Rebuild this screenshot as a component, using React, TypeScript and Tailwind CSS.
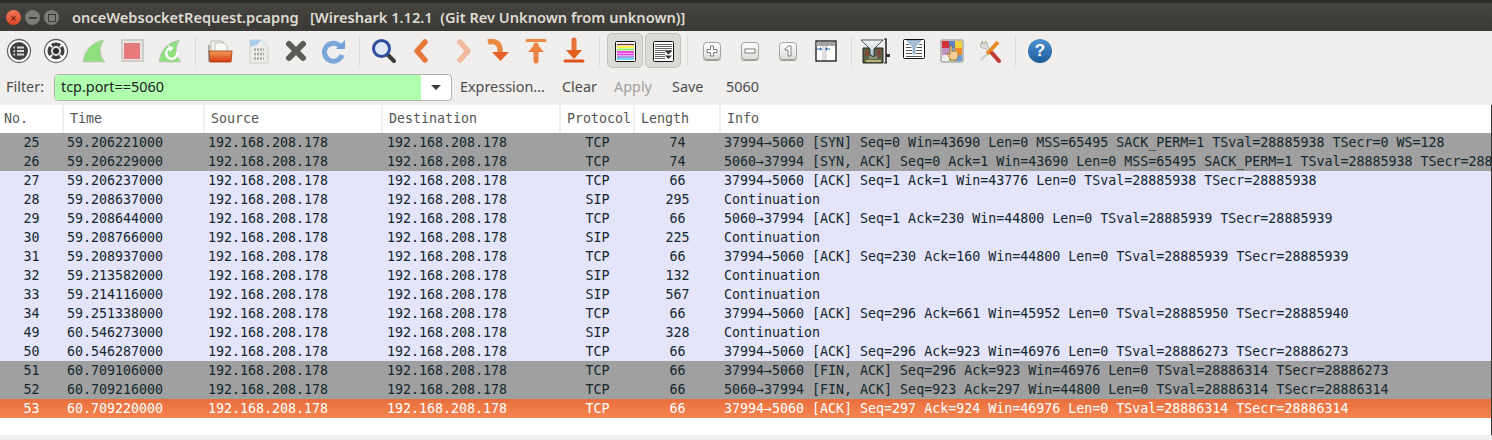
import type { ReactNode } from 'react';

type Packet = [number, string, string, number, string, ('gray' | 'sel')?];

const SRC = '192.168.208.178';

const PACKETS: Packet[] = [
  [25, '59.206221000', 'TCP', 74, '37994→5060 [SYN] Seq=0 Win=43690 Len=0 MSS=65495 SACK_PERM=1 TSval=28885938 TSecr=0 WS=128', 'gray'],
  [26, '59.206229000', 'TCP', 74, '5060→37994 [SYN, ACK] Seq=0 Ack=1 Win=43690 Len=0 MSS=65495 SACK_PERM=1 TSval=28885938 TSecr=288', 'gray'],
  [27, '59.206237000', 'TCP', 66, '37994→5060 [ACK] Seq=1 Ack=1 Win=43776 Len=0 TSval=28885938 TSecr=28885938'],
  [28, '59.208637000', 'SIP', 295, 'Continuation'],
  [29, '59.208644000', 'TCP', 66, '5060→37994 [ACK] Seq=1 Ack=230 Win=44800 Len=0 TSval=28885939 TSecr=28885939'],
  [30, '59.208766000', 'SIP', 225, 'Continuation'],
  [31, '59.208937000', 'TCP', 66, '37994→5060 [ACK] Seq=230 Ack=160 Win=44800 Len=0 TSval=28885939 TSecr=28885939'],
  [32, '59.213582000', 'SIP', 132, 'Continuation'],
  [33, '59.214116000', 'SIP', 567, 'Continuation'],
  [34, '59.251338000', 'TCP', 66, '37994→5060 [ACK] Seq=296 Ack=661 Win=45952 Len=0 TSval=28885950 TSecr=28885940'],
  [49, '60.546273000', 'SIP', 328, 'Continuation'],
  [50, '60.546287000', 'TCP', 66, '37994→5060 [ACK] Seq=296 Ack=923 Win=46976 Len=0 TSval=28886273 TSecr=28886273'],
  [51, '60.709106000', 'TCP', 66, '37994→5060 [FIN, ACK] Seq=296 Ack=923 Win=46976 Len=0 TSval=28886314 TSecr=28886273', 'gray'],
  [52, '60.709216000', 'TCP', 66, '5060→37994 [FIN, ACK] Seq=923 Ack=297 Win=44800 Len=0 TSval=28886314 TSecr=28886314', 'gray'],
  [53, '60.709220000', 'TCP', 66, '37994→5060 [ACK] Seq=297 Ack=924 Win=46976 Len=0 TSval=28886314 TSecr=28886314', 'sel'],
];

function Tool({ children, first }: { children: ReactNode; first?: boolean }) {
  return (
    <div className={`flex h-full shrink-0 items-center justify-center ${first ? 'w-[37px]' : 'w-[38px]'}`}>
      {children}
    </div>
  );
}

function Sep() {
  return (
    <div className="flex h-full w-[12px] shrink-0 items-center justify-center">
      <div className="h-[30px] w-px bg-[#dedbd8]" />
    </div>
  );
}

function Icon({ children }: { children: ReactNode }) {
  return (
    <svg width="28" height="28" viewBox="0 0 28 28" className="shrink-0">
      {children}
    </svg>
  );
}

function Fin({ reload }: { reload?: boolean }) {
  return (
    <Icon>
      <path d="M3 25C4 14 11 5 24 3C19 10 19 18 25 25Z" fill="#8ee07e" stroke="#c9c9c5" strokeWidth="1" />
      {reload && (
        <>
          <path d="M17 11a5.500 5.500 0 1 0 4 4" fill="none" stroke="#fff" strokeWidth="2.400" />
          <path d="M12 8l5 3-3 4Z" fill="#fff" />
        </>
      )}
    </Icon>
  );
}

function ZoomBtn({ children }: { children: ReactNode }) {
  return (
    <div className="flex h-[18px] w-[18px] items-center justify-center rounded-[4px] border border-[#a5a3a0] bg-gradient-to-b from-white to-[#dfddda] shadow-[0_1px_0_#9a9894]">
      {children}
    </div>
  );
}

function ListIcon({ autoscroll }: { autoscroll?: boolean }) {
  return (
    <svg width="24" height="24" viewBox="0 0 24 24">
      <rect x="2.500" y="2.500" width="20" height="20" rx="1" fill="#fff" stroke="#111" />
      {autoscroll ? (
        <>
          {[5, 7, 9, 11, 13, 15, 17, 19].map((y) => (
            <path key={y} d={`M4 ${y + 0.5}H${y > 11 ? 14 : 21}`} stroke="#666" />
          ))}
          <path d="M14 12h7l-3.500 3.500ZM14 16.500h7l-3.500 3.500Z" fill="#333" />
        </>
      ) : (
        <>
          <path d="M4 5.500H21" stroke="#7a2b2b" strokeWidth="1.300" />
          <path d="M4 8H21" stroke="#fff04a" strokeWidth="2" />
          <path d="M4 10.500H21" stroke="#8ee86a" strokeWidth="2" />
          <path d="M4 13H21" stroke="#ec4fe0" strokeWidth="2" />
          <path d="M4 15.500H21" stroke="#d845ea" strokeWidth="2" />
          <path d="M4 18H21" stroke="#8f82e0" strokeWidth="1.600" />
          <path d="M4 20H21" stroke="#45d2ec" strokeWidth="1.600" />
        </>
      )}
    </svg>
  );
}

function Toolbar() {
  return (
    <div className="flex h-[39px] items-center">
      <Tool first>
        <svg width="26" height="26" viewBox="0 0 26 26">
          <circle cx="13" cy="13" r="11.500" fill="#fff" stroke="#666" strokeWidth="1.300" />
          <circle cx="13" cy="13" r="9" fill="#3f3f3f" />
          <path d="M11 9.500h7M11 13h7M11 16.500h7" stroke="#d8d8d8" strokeWidth="2" />
          <path d="M7.500 9.500h1.600M7.500 13h1.600M7.500 16.500h1.600" stroke="#d8d8d8" strokeWidth="2" />
        </svg>
      </Tool>
      <Tool>
        <svg width="26" height="26" viewBox="0 0 26 26">
          <circle cx="13" cy="13" r="11.500" fill="#fff" stroke="#666" strokeWidth="1.300" />
          <circle cx="13" cy="13" r="8.500" fill="#3f3f3f" />
          <path d="M6.500 6.500l2.500 2.500M19.500 6.500L17 9M6.500 19.500L9 17M19.500 19.500L17 17" stroke="#fff" strokeWidth="2" />
          <circle cx="13" cy="13" r="5" fill="#e4e3e0" />
          <circle cx="13" cy="13" r="3" fill="#2e2e2e" />
        </svg>
      </Tool>
      <Tool>
        <Fin />
      </Tool>
      <Tool>
        <div className="flex h-[23px] w-[23px] items-center justify-center border-2 border-[#cfcdca] bg-[#e8e6e4]">
          <div className="h-[16px] w-[16px] bg-[#e77b7b]" />
        </div>
      </Tool>
      <Tool>
        <Fin reload />
      </Tool>
      <Sep />
      <Tool>
        <Icon>
          <path d="M5 4h11l4 4v8H5Z" fill="#f6f5f1" stroke="#b8b6ae" />
          <path d="M9 6h9l3 3v8H9Z" fill="#fbfaf7" stroke="#c2c0b9" />
          <path d="M3 14h23l-1 11H4Z" fill="url(#folder)" stroke="#a8300c" strokeWidth="0.800" />
          <path d="M3 8v17" stroke="#6e6a5f" />
          <defs>
            <linearGradient id="folder" x1="0" y1="0" x2="0" y2="1">
              <stop offset="0" stopColor="#f4a05a" />
              <stop offset="1" stopColor="#d6370f" />
            </linearGradient>
          </defs>
        </Icon>
      </Tool>
      <Tool>
        <Icon>
          <path d="M6 3h12l6 6v17H6Z" fill="#eeeee8" stroke="#cbcbc5" />
          <path d="M6 3h11l-4 5-7 2Z" fill="#a9cdea" />
          <path d="M18 3l6 6h-6Z" fill="#dfe9ef" />
          <path d="M10 12.500h10M10 17h10M10 21.500h10" stroke="#a8a8a2" strokeWidth="2.400" strokeDasharray="2 1" />
        </Icon>
      </Tool>
      <Tool>
        <Icon>
          <path d="M7 7L21 21M21 7L7 21" stroke="#5b5b58" strokeWidth="6" strokeLinecap="round" />
        </Icon>
      </Tool>
      <Tool>
        <Icon>
          <path d="M20 9A9 9 0 1 0 22 18" fill="none" stroke="#7ba8da" strokeWidth="5" />
          <path d="M16 12h9V3Z" fill="#6f9fd6" />
        </Icon>
      </Tool>
      <Sep />
      <Tool>
        <Icon>
          <path d="M17 17l7 7" stroke="#3a3a3a" strokeWidth="4" strokeLinecap="round" />
          <circle cx="11.500" cy="11.500" r="8" fill="#dfe8f5" stroke="#2d4f9e" strokeWidth="3" />
        </Icon>
      </Tool>
      <Tool>
        <Icon>
          <path d="M17 5L9 14l8 9" fill="none" stroke="#e9773a" strokeWidth="5.500" strokeLinecap="round" strokeLinejoin="round" />
        </Icon>
      </Tool>
      <Tool>
        <div className="ml-[3px] flex">
          <Icon>
            <path d="M12 5l8 9-8 9" fill="none" stroke="#f3b99d" strokeWidth="5.500" strokeLinecap="round" strokeLinejoin="round" />
          </Icon>
        </div>
      </Tool>
      <Tool>
        <Icon>
          <path d="M4 5c8-2 13 2 12 11" fill="none" stroke="#ec8a44" strokeWidth="5.500" />
          <path d="M8 15h17l-8.500 9Z" fill="#e4642a" />
        </Icon>
      </Tool>
      <Tool>
        <Icon>
          <path d="M5 3.500h18" stroke="#ec8a44" strokeWidth="3" strokeLinecap="round" />
          <path d="M14 8v16" stroke="#ec8040" strokeWidth="5" strokeLinecap="round" />
          <path d="M6 15l8-9 8 9Z" fill="#ec8040" />
        </Icon>
      </Tool>
      <Tool>
        <Icon>
          <path d="M5 24h18" stroke="#e4521c" strokeWidth="3" strokeLinecap="round" />
          <path d="M14 3v15" stroke="#e9723a" strokeWidth="5" strokeLinecap="round" />
          <path d="M6 13l8 9 8-9Z" fill="#e4601f" />
        </Icon>
      </Tool>
      <Sep />
      <div className="ml-[2px] flex h-[35px] w-[36px] shrink-0 items-center justify-center rounded-[5px] border border-[#c4c2bf] bg-[#dcdad7]">
        <ListIcon />
      </div>
      <div className="ml-[2px] flex h-[35px] w-[36px] shrink-0 items-center justify-center rounded-[5px] border border-[#c4c2bf] bg-[#dcdad7]">
        <ListIcon autoscroll />
      </div>
      <Sep />
      <Tool>
        <ZoomBtn>
          <svg width="12" height="12" viewBox="0 0 12 12">
            <path d="M4.500 1h3v3.500H11v3H7.500V11h-3V7.500H1v-3h3.500Z" fill="#fff" stroke="#7d7c78" />
          </svg>
        </ZoomBtn>
      </Tool>
      <Tool>
        <ZoomBtn>
          <svg width="12" height="12" viewBox="0 0 12 12">
            <rect x="1" y="4" width="10" height="4" fill="#fff" stroke="#7d7c78" />
          </svg>
        </ZoomBtn>
      </Tool>
      <Tool>
        <ZoomBtn>
          <svg width="12" height="12" viewBox="0 0 12 12">
            <path d="M3 4l3-3h3v10H6V5H3Z" fill="#fff" stroke="#7d7c78" />
          </svg>
        </ZoomBtn>
      </Tool>
      <Tool>
        <svg width="22" height="22" viewBox="0 0 22 22">
          <rect x="1" y="1" width="20" height="20" fill="#fff" stroke="#111" strokeWidth="1.300" />
          <rect x="2" y="2" width="18" height="4" fill="#a9a9a9" />
          <rect x="7" y="6" width="5" height="14" fill="#dedede" />
          <path d="M1.500 2v4M7 2v4M12 2v4M17 2v4" stroke="#888" />
          <path d="M2 9h3M12 9h3" stroke="#2c5fa8" />
          <path d="M5 7l2 2-2 2ZM12 7l-2 2 2 2Z" fill="#2c5fa8" />
        </svg>
      </Tool>
      <Sep />
      <Tool>
        <svg width="32" height="30" viewBox="0 0 32 30">
          <path d="M3 12h20v15H3Z" fill="#5a6647" stroke="#222" />
          <path d="M5 14h4v6H5ZM17 13h4v8h-4Z" fill="#7f4a3a" />
          <path d="M9 20h8v3H9Z" fill="#8a9478" />
          <path d="M6 24h15v2H6Z" fill="#c3b27c" />
          <path d="M26 3v24" stroke="#222" strokeWidth="1.500" />
          <path d="M24 3h3M24 27h3" stroke="#222" />
          <path d="M26 18h4v3h-4Z" fill="#333" />
          <path d="M1 4h22l-9 9v8l-4-2v-6Z" fill="url(#funnel)" stroke="#222" strokeWidth="0.800" />
          <defs>
            <linearGradient id="funnel" x1="0" y1="0" x2="0" y2="1">
              <stop offset="0" stopColor="#fff" />
              <stop offset="1" stopColor="#9fb7c9" />
            </linearGradient>
          </defs>
        </svg>
      </Tool>
      <Tool>
        <svg width="24" height="24" viewBox="0 0 24 24" className="-mt-[4px]">
          <rect x="1.500" y="2.500" width="21" height="19" rx="1" fill="#fff" stroke="#111" />
          <path d="M4 7.500H20M4 10.500H20M4 13.500H20M4 16.500H20M4 19.500H20" stroke="#555" />
          <path d="M3 3h18l-7 8v8h-4v-8Z" fill="#fff" />
          <path d="M5 3.500h14l-6 6.500v7h-2v-7Z" fill="#a6c0d6" stroke="#6c8aa3" strokeWidth="0.600" />
        </svg>
      </Tool>
      <Tool>
        <svg width="24" height="24" viewBox="0 0 24 24">
          <rect x="1" y="1" width="22" height="22" rx="1" fill="#eee" stroke="#888" />
          <rect x="2" y="2" width="7" height="7" fill="#d4333a" />
          <rect x="9" y="2" width="6" height="7" fill="#5c7fc0" />
          <rect x="15" y="2" width="7" height="7" fill="#f2d23c" />
          <rect x="2" y="9" width="7" height="7" fill="#c094c0" />
          <rect x="9" y="9" width="6" height="7" fill="#7fa7d8" />
          <rect x="15" y="9" width="7" height="7" fill="#f08c2c" />
          <rect x="9" y="16" width="6" height="6" fill="#8ccb50" />
          <rect x="15" y="16" width="7" height="6" fill="#6aa0d8" />
          <path d="M10 7h2v6l1-1h3c1 0 2 1 2 2v4l-2 3h-5l-4-6 1-1 2 2Z" fill="#f6cf98" stroke="#a86a20" strokeWidth="0.800" />
        </svg>
      </Tool>
      <Tool>
        <svg width="24" height="24" viewBox="0 0 24 24">
          <path d="M5 2a4.500 4.500 0 0 0-2 6c1 1 2 1.500 4 1L19 22l2-1L9 7c.5-2 0-4-1.500-5l-1 3-2.500-.5Z" fill="#e2e2e0" stroke="#9a9a96" strokeWidth="0.800" />
          <path d="M20 3L9 15" stroke="#ee8a22" strokeWidth="4" />
          <path d="M9 15L3 21" stroke="#c9c9c6" strokeWidth="2" />
          <path d="M14 14l7 8" stroke="#c43a34" strokeWidth="4" strokeLinecap="round" />
        </svg>
      </Tool>
      <Sep />
      <Tool>
        <div className="flex h-[24px] w-[24px] items-center justify-center rounded-full bg-gradient-to-b from-[#4c93cf] to-[#1f5d9c] font-['Liberation_Sans',sans-serif] text-[17px] font-bold text-white">
          ?
        </div>
      </Tool>
    </div>
  );
}

function FilterRow() {
  return (
    <div className="flex h-[35px] items-center pb-[1px] font-['Noto_Sans',sans-serif] text-[14.4px] text-[#4c4c4c]">
      <span className="ml-[6px] w-[48px]">Filter:</span>
      <div className="flex h-[27px] w-[398px] overflow-hidden rounded-[4px] border border-[#b5b3af] bg-white">
        <div className="flex flex-1 items-center bg-[#afffaf] pl-[6px] text-[#222]">tcp.port==5060</div>
        <div className="flex w-[30px] items-center justify-center">
          <div className="h-0 w-0 border-x-[5px] border-t-[5px] border-x-transparent border-t-[#3c3c3c]" />
        </div>
      </div>
      <span className="ml-[8px] w-[102px]">Expression...</span>
      <span className="w-[52px]">Clear</span>
      <span className="w-[58px] text-[#a3a19d]">Apply</span>
      <span className="w-[54px]">Save</span>
      <span>5060</span>
    </div>
  );
}

function HeaderCell({ label, className }: { label: string; className: string }) {
  return (
    <div className={`flex h-full shrink-0 items-center border-r-2 border-[#f0efed] ${className}`}>
      {label}
    </div>
  );
}

function PacketRow({ p }: { p: Packet }) {
  const [no, time, proto, len, info, kind] = p;
  const color =
    kind === 'gray'
      ? 'bg-[#a0a0a0] text-[#12272e]'
      : kind === 'sel'
        ? 'bg-gradient-to-b from-[#e96f3d] to-[#f58451] text-white'
        : 'bg-[#e4e4fa] text-[#12272e]';
  return (
    <div className={`flex h-[19px] items-center whitespace-pre ${color}`}>
      <div className="w-[63px] shrink-0 text-center">{no}</div>
      <div className="w-[141px] shrink-0 pl-[4px]">{time}</div>
      <div className="w-[178px] shrink-0 pl-[4px]">{SRC}</div>
      <div className="w-[178px] shrink-0 pl-[5px]">{SRC}</div>
      <div className="w-[74px] shrink-0 pl-[1px] text-center">{proto}</div>
      <div className="w-[86px] shrink-0 pl-[1px] text-center">{len}</div>
      <div className="pl-[4px]">{info}</div>
    </div>
  );
}

export default function App() {
  return (
    <div className="flex h-[440px] w-[1492px] flex-col overflow-hidden bg-[#f0efed]">
      <div className="flex h-[31px] shrink-0 items-center border-t-[3px] border-[#2b2a27] bg-gradient-to-b from-[#45443f] to-[#3a3935] pt-[1px]">
        <div className="ml-[6px] flex h-[15px] w-[15px] items-center justify-center rounded-full bg-gradient-to-b from-[#f4765a] to-[#d9461f] text-[11px] leading-none text-[#5c1a08]">
          ×
        </div>
        <div className="ml-[4px] flex h-[15px] w-[15px] items-center justify-center rounded-full bg-[#7c7b75]">
          <div className="h-[2px] w-[8px] bg-[#3c3b37]" />
        </div>
        <div className="ml-[4px] flex h-[15px] w-[15px] items-center justify-center rounded-full bg-[#7c7b75]">
          <div className="h-[8px] w-[8px] border border-[#3c3b37]" />
        </div>
        <span className="ml-[13px] whitespace-pre font-['Noto_Sans',sans-serif] text-[14.6px] font-semibold text-[#dfdbd2]">
          onceWebsocketRequest.pcapng   [Wireshark 1.12.1  (Git Rev Unknown from unknown)]
        </span>
      </div>
      <Toolbar />
      <FilterRow />
      <div className="flex flex-1 flex-col border-r border-[#333] bg-white font-['DejaVu_Sans_Mono',monospace] text-[13.3px]">
        <div className="flex h-[28px] shrink-0 items-center text-[#555]">
          <HeaderCell label="No." className="w-[64px] pl-[4px]" />
          <HeaderCell label="Time" className="w-[141px] pl-[6px]" />
          <HeaderCell label="Source" className="w-[178px] pl-[6px]" />
          <HeaderCell label="Destination" className="w-[178px] pl-[6px]" />
          <HeaderCell label="Protocol" className="w-[74px] pl-[6px]" />
          <HeaderCell label="Length" className="w-[86px] pl-[6px]" />
          <div className="pl-[6px]">Info</div>
        </div>
        {PACKETS.map((p) => (
          <PacketRow key={p[0]} p={p} />
        ))}
      </div>
      <div className="h-[5px] shrink-0 bg-[#f0efed]" />
    </div>
  );
}
